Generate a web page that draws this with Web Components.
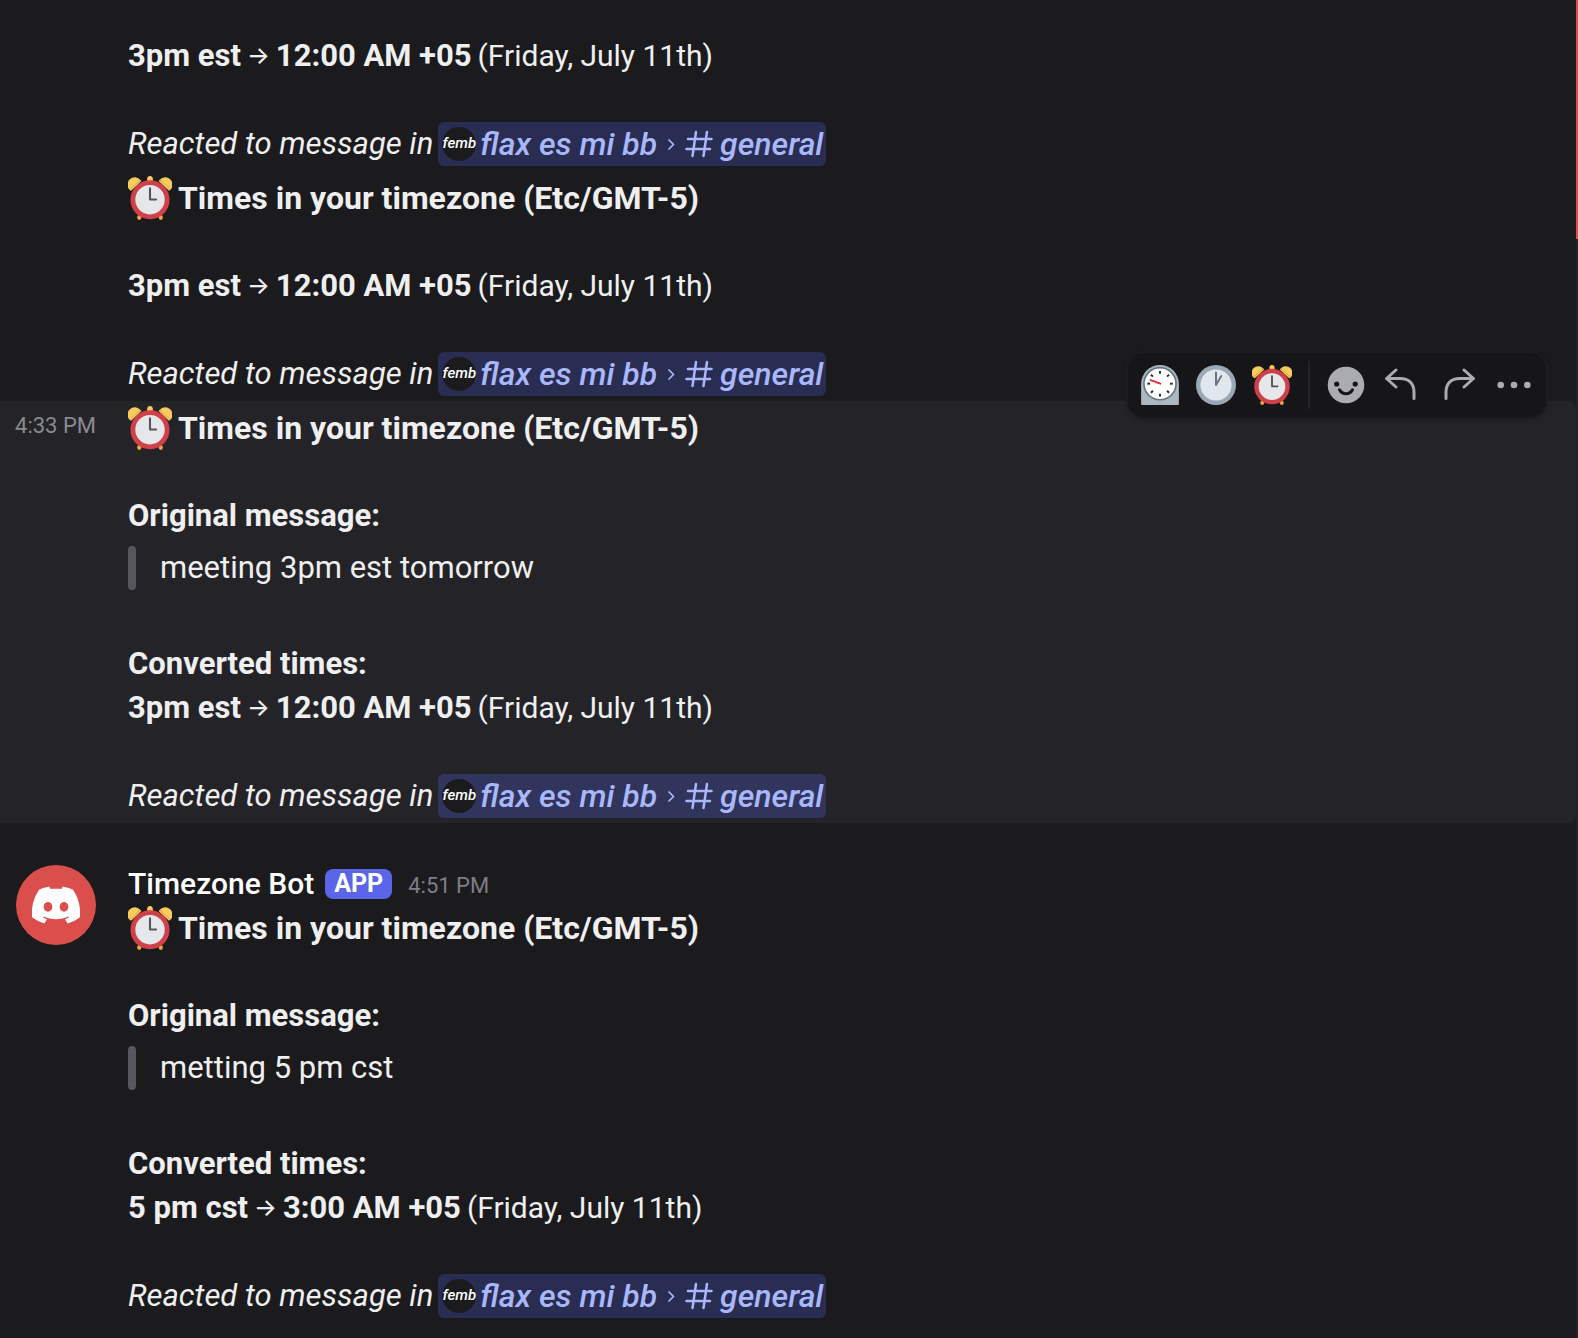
<!DOCTYPE html>
<html lang="en">
<head>
<meta charset="utf-8">
<title>Timezone Bot</title>
<style>
  body { margin: 0; background: #1b1b1d; color: #efeff0; font: 31px/44px Roboto, "Liberation Sans", sans-serif; }
</style>
</head>
<body>
<chat-log>
  <chat-message>
    <message-section><converted-time from="3pm est" to="12:00 AM +05"></converted-time></message-section>
    <message-section><reacted-in></reacted-in></message-section>
  </chat-message>
  <chat-message>
    <message-section><times-title></times-title></message-section>
    <message-section><converted-time from="3pm est" to="12:00 AM +05"></converted-time></message-section>
    <message-section><reacted-in></reacted-in></message-section>
  </chat-message>
  <chat-message active>
    <message-toolbar slot="toolbar"></message-toolbar>
    <time slot="aside">4:33 PM</time>
    <message-section><times-title></times-title></message-section>
    <message-section><b>Original message:</b><quote-block>meeting 3pm est tomorrow</quote-block></message-section>
    <message-section><b>Converted times:</b><converted-time from="3pm est" to="12:00 AM +05"></converted-time></message-section>
    <message-section><reacted-in></reacted-in></message-section>
  </chat-message>
  <chat-message first>
    <bot-avatar slot="aside"></bot-avatar>
    <message-author name="Timezone Bot" time="4:51 PM"></message-author>
    <message-section><times-title></times-title></message-section>
    <message-section><b>Original message:</b><quote-block>metting 5 pm cst</quote-block></message-section>
    <message-section><b>Converted times:</b><converted-time from="5 pm cst" to="3:00 AM +05"></converted-time></message-section>
    <message-section><reacted-in></reacted-in></message-section>
  </chat-message>
</chat-log>
<script>
const define = (name, render) => customElements.define(name, class extends HTMLElement {
  connectedCallback() {
    if (this.shadowRoot) return;
    this.attachShadow({ mode: 'open' }).innerHTML = render(this);
  }
});

const alarmSvg = `<svg viewBox="0 0 36 36" aria-hidden="true">
  <path fill="#f9cb5d" d="M1.2 11.2A6 6 0 0 1 10 3L6 7zM34.8 11.2A6 6 0 0 0 26 3l4 4z"/>
  <path fill="#f9cb5d" d="M1.2 11.2 10 3 11 4 2.500 12zM34.8 11.2 26 3l-1 1 8.500 8z"/>
  <circle cx="18" cy="2.200" r="2.200" fill="#f9cb5d"/><path fill="#f9cb5d" d="M15.8 2h4.400v3h-4.400z"/>
  <ellipse cx="9.200" cy="34" rx="1.700" ry="2" fill="#f4a63a"/><ellipse cx="26.800" cy="34" rx="1.700" ry="2" fill="#f4a63a"/>
  <circle cx="18" cy="19.400" r="16" fill="#cf404b"/><circle cx="18" cy="19.400" r="12" fill="#e6e7e9"/>
  <path d="M18 10v9.200h5" fill="none" stroke="#50565c" stroke-width="1.700" stroke-linecap="round" stroke-linejoin="round"/>
</svg>`;

define('chat-log', () => `<style>
  :host { display: grid; grid-template-columns: minmax(0, 1fr) 2px; min-height: 100vh; overflow: hidden; }
  main { padding: 29px 0 15px; }
  aside { background: #232327; }
  aside::before { content: ""; display: block; height: 239px; background: #da4f4b; }
</style><main><slot></slot></main><aside></aside>`);

define('chat-message', () => `<style>
  :host { display: grid; grid-template-columns: 96px minmax(0, 1fr); column-gap: 32px; padding: 5px 0; position: relative; }
  :host([active]) { background: #242428; border-radius: 0 8px 8px 0; }
  :host([first]) { margin-top: 34px; }
  .aside { text-align: right; }
  .body { display: flex; flex-direction: column; }
  ::slotted(time) { display: block; color: #8a8a91; font-size: 22px; line-height: 40px; }
  ::slotted(message-toolbar) { position: absolute; top: -48px; right: 30px; }
</style><div class="aside"><slot name="aside"></slot></div><div class="body"><slot></slot></div><slot name="toolbar"></slot>`);

define('message-section', () => `<style>
  :host { display: flex; flex-direction: column; }
  :host(:not(:last-child)) { margin-bottom: 44px; }
</style><slot></slot>`);

define('bot-avatar', () => `<style>
  :host { display: flex; justify-content: flex-end; padding-top: 3px; }
  span { display: grid; place-items: center; width: 80px; height: 80px; border-radius: 50%; background: #da4f4b; }
  svg { width: 52px; height: 52px; fill: #fff; }
</style><span role="img" aria-label="Timezone Bot"><svg viewBox="0 0 24 24"><path d="M19.730 4.870a18.200 18.200 0 0 0-4.600-1.440c-.21.4-.4.8-.58 1.210-1.690-.25-3.400-.25-5.100 0-.18-.41-.37-.82-.59-1.200-1.600.27-3.140.75-4.600 1.430A19.040 19.040 0 0 0 .96 17.700a18.430 18.430 0 0 0 5.630 2.870c.46-.62.86-1.280 1.200-1.980-.65-.25-1.290-.55-1.900-.92.17-.12.32-.24.47-.37 3.580 1.700 7.700 1.700 11.280 0l.46.37c-.6.36-1.250.67-1.900.92.35.7.75 1.350 1.200 1.980 2.030-.63 3.940-1.600 5.640-2.870.47-4.870-.78-9.090-3.300-12.830ZM8.300 15.120c-1.100 0-2-1.020-2-2.270 0-1.240.88-2.260 2-2.260s2.020 1.020 2 2.260c0 1.250-.89 2.270-2 2.270Zm7.400 0c-1.100 0-2-1.020-2-2.270 0-1.240.88-2.260 2-2.260s2.020 1.020 2 2.260c0 1.250-.88 2.270-2 2.270Z"/></svg></span>`);

define('message-author', el => `<style>
  :host { display: flex; align-items: center; height: 44px; }
  .name { color: #fff; font-size: 30px; font-weight: 500; }
  .tag { margin: 0 16px 0 11px; padding: 0 9px; border-radius: 8px; background: #5a65ea; color: #fff; font-size: 25px; font-weight: 700; line-height: 30px; }
  time { color: #7e7e86; font-size: 22px; padding-top: 4px; }
</style><span class="name">${el.getAttribute('name')}</span><span class="tag">APP</span><time>${el.getAttribute('time')}</time>`);

define('times-title', () => `<style>
  :host { display: flex; align-items: center; gap: 6px; font-size: 32px; font-weight: 700; }
  svg { width: 44px; height: 44px; }
</style>${alarmSvg}<span>Times in your timezone (Etc/GMT-5)</span>`);

define('quote-block', () => `<style>
  :host { display: flex; margin: 8px 0; }
  i { width: 8px; border-radius: 4px; background: #57575e; }
  blockquote { margin: 0 0 0 24px; }
</style><i></i><blockquote><slot></slot></blockquote>`);

define('converted-time', el => `<style>
  :host { display: flex; align-items: center; gap: 6px; white-space: nowrap; }
  .arrow { font-family: Inter, sans-serif; font-size: 24px; font-weight: 500; }
  .date { font-size: 30px; }
</style><b>${el.getAttribute('from')}</b> <span class="arrow">→</span> <b>${el.getAttribute('to')}</b> <span class="date">(Friday, July 11th)</span>`);

define('reacted-in', () => `<style>
  :host { display: flex; align-items: center; gap: 5px; font-style: italic; }
  a { display: flex; align-items: center; height: 44px; padding: 0 3px 0 4px; border-radius: 6px; background: rgba(88, 101, 242, .25); color: #a9b7fb; font-size: 32px; font-weight: 500; text-decoration: none; }
  .server { width: 34px; height: 34px; margin-right: 4px; border-radius: 50%; background: #1b1b1d; color: #fff; font-size: 15px; line-height: 32px; text-align: center; }
  svg { fill: none; stroke: currentColor; stroke-linecap: round; stroke-linejoin: round; }
  .chevron { width: 16px; height: 16px; margin: 0 6px; stroke-width: 1.700; }
  .hash { width: 28px; height: 28px; margin-right: 7px; stroke-width: 2.500; }
</style><span>Reacted to message in</span><a href="#general"><span class="server">femb</span><span>flax es mi bb</span><svg class="chevron" viewBox="0 0 16 16" aria-hidden="true"><path d="M6 4l4.500 4.500L6 13"/></svg><svg class="hash" viewBox="0 0 28 28" aria-hidden="true"><path d="M11 2 7.500 26M22 2l-3.500 24M3 9h23.500M1.500 19h23.500"/></svg><span>general</span></a>`);

const ticks = [0, 45, 90, 135, 180, 225, 270, 315].map(a => `<path d="M18 5.300v2.500" transform="rotate(${a} 18 16.800)"/>`).join('');

define('message-toolbar', () => `<style>
  :host { display: flex; align-items: center; box-sizing: border-box; height: 64px; padding: 0 4px; border-radius: 16px; background: #161618; box-shadow: 0 0 0 2px #1d1d20, 0 2px 6px rgba(0, 0, 0, .25); }
  button { display: grid; place-items: center; width: 56px; height: 56px; padding: 0; border: 0; background: none; color: #ababb2; }
  svg { width: 40px; height: 40px; }
  hr { width: 2px; height: 48px; margin: 0 8px; border: 0; background: #242428; }
  .line { fill: none; stroke: currentColor; stroke-width: 3; stroke-linecap: round; stroke-linejoin: round; }
</style>
<button aria-label="Timer clock"><svg viewBox="0 0 36 36"><path fill="#aab8c2" d="M1 17a17 17 0 0 1 34 0v18a1 1 0 0 1-1 1H2a1 1 0 0 1-1-1z"/><circle cx="18" cy="16.800" r="15.200" fill="#66757f"/><circle cx="18" cy="16.800" r="13.700" fill="#fff"/><g stroke="#292f33" stroke-width="1.800">${ticks}</g><path d="M9.600 13.600l8.700 3.200" stroke="#dd2e44" stroke-width="1.800" stroke-linecap="round"/></svg></button>
<button aria-label="One o'clock"><svg viewBox="0 0 36 36"><circle cx="18" cy="18" r="18" fill="#9aa9b5"/><circle cx="18" cy="18" r="14" fill="#e1e8ed"/><path d="M18 6.800V18l4.700-8.100" fill="none" stroke="#66757f" stroke-width="1.800" stroke-linecap="round" stroke-linejoin="round"/></svg></button>
<button aria-label="Alarm clock">${alarmSvg}</button>
<hr>
<button aria-label="Add reaction"><svg viewBox="0 0 40 40"><circle cx="20" cy="20" r="18.300" fill="currentColor"/><g fill="#161618"><circle cx="10.700" cy="19" r="2.600"/><circle cx="29.200" cy="19" r="2.600"/></g><path d="M13.500 24.800c2.800 5.200 10.200 5.200 13 0" fill="none" stroke="#161618" stroke-width="3" stroke-linecap="round"/></svg></button>
<button aria-label="Reply"><svg class="line" viewBox="0 0 40 40"><path d="M14 5 4.500 13.500 14 22M4.500 13.500H18c9 0 14 5 14 14V33.500"/></svg></button>
<button aria-label="Forward"><svg class="line" viewBox="0 0 40 40"><path d="M26 5l9.500 8.500L26 22M35.500 13.500H22c-9 0-14 5-14 14V33.500"/></svg></button>
<button aria-label="More"><svg viewBox="0 0 40 40" fill="currentColor"><circle cx="6.700" cy="20" r="3.300"/><circle cx="20" cy="20" r="3.300"/><circle cx="33.300" cy="20" r="3.300"/></svg></button>`);
</script>
</body>
</html>
